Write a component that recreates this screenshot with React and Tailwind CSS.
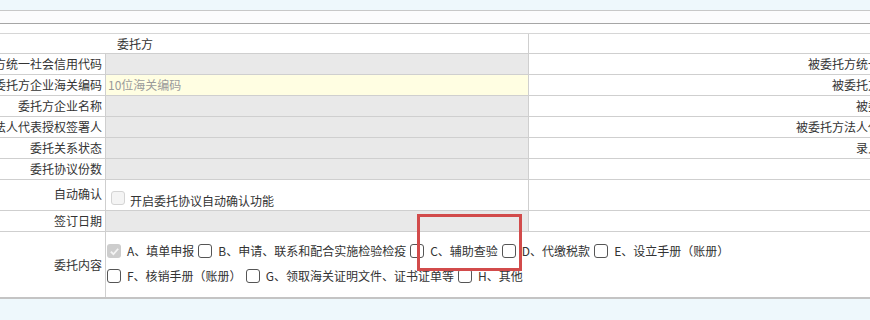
import React from 'react';

const font = { fontFamily: '"Noto Sans CJK SC", "Liberation Sans", sans-serif' };

const rows = [
    { label: '委托方统一社会信用代码', right: '被委托方统一社会信用代码', kind: 'gray' },
    { label: '委托方企业海关编码', right: '被委托方企业海关编码', kind: 'yellow', placeholder: '10位海关编码' },
    { label: '委托方企业名称', right: '被委托方企业名称', kind: 'gray' },
    { label: '委托方法人代表授权签署人', right: '被委托方法人代表授权签署人', kind: 'gray' },
    { label: '委托关系状态', right: '录入委托关系状态', kind: 'gray' },
    { label: '委托协议份数', right: '', kind: 'gray' },
];

const Box = ({ checked }) => (
    checked ? (
        <span className="w-[14px] h-[14px] rounded-[3px] bg-[#cdcdcd] flex items-center justify-center shrink-0">
            <svg width="11" height="11" viewBox="0 0 12 12">
                <path d="M2 6.2 L4.8 9 L10 3" fill="none" stroke="#f4f4f4" strokeWidth="2" />
            </svg>
        </span>
    ) : (
        <span className="w-[14px] h-[14px] rounded-[3px] border border-[#555] bg-white shrink-0"></span>
    )
);

const Item = ({ text, checked }) => (
    <span className="flex items-center gap-[6px] mr-[4px]">
        <Box checked={checked} />
        <span className="whitespace-nowrap">{text}</span>
    </span>
);

const App = () => {
    return (
        <div className="w-[870px] h-[320px] overflow-hidden bg-[#eef8fc] text-[12px] leading-4 text-[#333] relative" style={font}>
            <div className="h-[10px]"></div>
            <div className="h-[13px] border-t border-[#c8c8c8] bg-[#fcfcfd]"></div>
            <div className="h-[10px] border-t border-[#a6a6a6] bg-white"></div>

            <div className="w-full bg-white border-t border-[#d6d6d6]">
                {/* header row */}
                <div className="flex h-[20px] border-b border-[#cfcfcf]">
                    <div className="w-[529px] border-r border-[#cfcfcf] flex items-center pl-[117px]">委托方</div>
                    <div className="flex-1"></div>
                </div>

                {rows.map(row => (
                    <div key={row.label} className="flex h-[21px] border-b border-[#cfcfcf]">
                        <div className="w-[106px] border-r border-[#cfcfcf] flex items-center justify-end overflow-hidden whitespace-nowrap pr-[3px]">
                            {row.label}
                        </div>
                        <div className={`w-[423px] border-r border-[#cfcfcf] flex items-center pl-[2px] ${row.kind === 'yellow' ? 'bg-[#fffee2] text-[#9a9a9a]' : 'bg-[#e9e9e9]'}`}>
                            {row.placeholder}
                        </div>
                        <div className="flex-1 min-w-0 flex items-center justify-end overflow-hidden whitespace-nowrap">
                            <span className="shrink-0 mr-[-82px]">{row.right}</span>
                        </div>
                    </div>
                ))}

                {/* auto confirm */}
                <div className="flex h-[31px] border-b border-[#cfcfcf]">
                    <div className="w-[106px] border-r border-[#cfcfcf] flex items-center justify-end pr-[3px] pb-[3px]">自动确认</div>
                    <div className="w-[423px] border-r border-[#cfcfcf] flex items-start pl-[5px] pt-[11px] gap-[5px]">
                        <span className="w-[14px] h-[14px] rounded-[3px] border border-[#d4d4d4] bg-[#f4f4f4] shrink-0"></span>
                        <span className="mt-[2px]">开启委托协议自动确认功能</span>
                    </div>
                    <div className="flex-1"></div>
                </div>

                {/* sign date */}
                <div className="flex h-[21px] border-b border-[#cfcfcf]">
                    <div className="w-[106px] border-r border-[#cfcfcf] flex items-center justify-end pr-[3px]">签订日期</div>
                    <div className="w-[423px] border-r border-[#cfcfcf] bg-[#e9e9e9]"></div>
                    <div className="flex-1"></div>
                </div>

                {/* content */}
                <div className="flex h-[67px] border-b-2 border-[#c4c4c4]">
                    <div className="w-[106px] border-r border-[#cfcfcf] flex items-center justify-end pr-[3px]">委托内容</div>
                    <div className="flex-1 flex flex-col gap-[5px] pt-[9px] pl-[1px]">
                        <div className="flex items-center h-[20px]">
                            <Item text="A、填单申报" checked />
                            <Item text="B、申请、联系和配合实施检验检疫" />
                            <Item text="C、辅助查验" />
                            <Item text="D、代缴税款" />
                            <Item text="E、设立手册（账册）" />
                        </div>
                        <div className="flex items-center h-[20px]">
                            <Item text="F、核销手册（账册）" />
                            <Item text="G、领取海关证明文件、证书证单等" />
                            <Item text="H、其他" />
                        </div>
                    </div>
                </div>
            </div>

            {/* annotation box */}
            <div className="absolute left-[417px] top-[214px] w-[105px] h-[57px] border-[3px] border-[#d24b4b]"></div>
        </div>
    );
};

export default App;
